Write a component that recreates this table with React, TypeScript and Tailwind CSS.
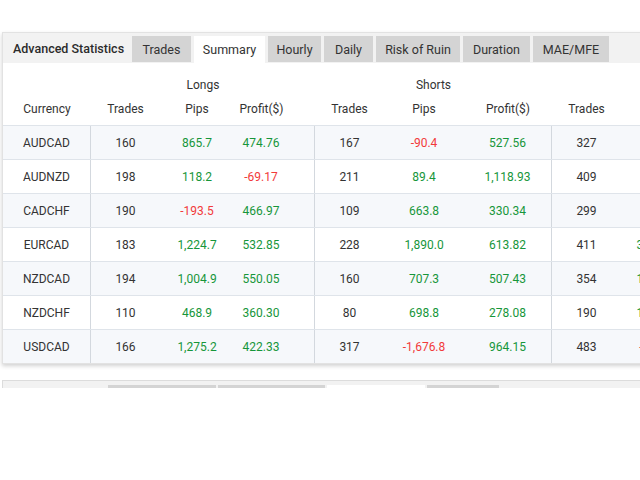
import React from "react";

type Row = {
  cur: string;
  lt: string; lp: string; lpr: string;
  st: string; sp: string; spr: string;
  tt: string; tp: string; tpr: string;
};

const rows: Row[] = [
  { cur: "AUDCAD", lt: "160", lp: "865.7", lpr: "474.76", st: "167", sp: "-90.4", spr: "527.56", tt: "327", tp: "775.3", tpr: "1,002.32" },
  { cur: "AUDNZD", lt: "198", lp: "118.2", lpr: "-69.17", st: "211", sp: "89.4", spr: "1,118.93", tt: "409", tp: "207.6", tpr: "1,049.76" },
  { cur: "CADCHF", lt: "190", lp: "-193.5", lpr: "466.97", st: "109", sp: "663.8", spr: "330.34", tt: "299", tp: "470.3", tpr: "797.31" },
  { cur: "EURCAD", lt: "183", lp: "1,224.7", lpr: "532.85", st: "228", sp: "1,890.0", spr: "613.82", tt: "411", tp: "3,114.7", tpr: "1,146.67" },
  { cur: "NZDCAD", lt: "194", lp: "1,004.9", lpr: "550.05", st: "160", sp: "707.3", spr: "507.43", tt: "354", tp: "1,712.2", tpr: "1,057.48" },
  { cur: "NZDCHF", lt: "110", lp: "468.9", lpr: "360.30", st: "80", sp: "698.8", spr: "278.08", tt: "190", tp: "1,167.7", tpr: "638.38" },
  { cur: "USDCAD", lt: "166", lp: "1,275.2", lpr: "422.33", st: "317", sp: "-1,676.8", spr: "964.15", tt: "483", tp: "-401.6", tpr: "1,386.48" },
];

const tabs = [
  { label: "Trades", w: "w-[59px]", active: false },
  { label: "Summary", w: "w-[71px]", active: true },
  { label: "Hourly", w: "w-[53px]", active: false },
  { label: "Daily", w: "w-[49px]", active: false },
  { label: "Risk of Ruin", w: "w-[84px]", active: false },
  { label: "Duration", w: "w-[67px]", active: false },
  { label: "MAE/MFE", w: "w-[76px]", active: false },
];

function Num({ v }: { v: string }) {
  const neg = v.startsWith("-");
  return <span className={neg ? "text-[#f23a3a]" : "text-[#16963a]"}>{v}</span>;
}

export default function App() {
  return (
    <div
      className="w-[640px] h-[480px] overflow-hidden bg-white pt-[32px] pl-[2px] text-[#333] text-[12px]"
      style={{ fontFamily: "Roboto, 'Liberation Sans', sans-serif" }}
    >
      <div className="w-[800px] border border-[#e2e2e2] shadow-[0_2px_4px_rgba(0,0,0,0.18)] bg-white">
        {/* header / tabs */}
        <div className="flex items-end h-[30px] bg-[#f2f2f2]">
          <div className="w-[129px] shrink-0 pl-[10px] pt-[2px] self-center text-[12.5px] font-medium text-[#2b2b2b]">
            Advanced Statistics
          </div>
          <div className="flex gap-[3px]">
            {tabs.map((t) => (
              <div
                key={t.label}
                className={`${t.w} shrink-0 h-[26px] pt-[2px] flex items-center justify-center text-[12.5px] ${
                  t.active ? "bg-white text-[#333] h-[27px]" : "bg-[#d4d4d4] text-[#333]"
                }`}
              >
                {t.label}
              </div>
            ))}
          </div>
        </div>

        {/* group header */}
        <div className="flex h-[29px] pt-[15px] leading-[14px]">
          <div className="w-[88px] shrink-0" />
          <div className="w-[224px] shrink-0 text-center">Longs</div>
          <div className="w-[237px] shrink-0 text-center">Shorts</div>
          <div className="w-[207px] shrink-0 text-center">Total</div>
        </div>
        {/* column header */}
        <div className="flex h-[33px] items-center pt-[1px]">
          <div className="w-[88px] shrink-0 text-center">Currency</div>
          <div className="w-[69px] shrink-0 text-center">Trades</div>
          <div className="w-[74px] shrink-0 text-center">Pips</div>
          <div className="w-[81px] shrink-0 pr-[26px] text-center">Profit($)</div>
          <div className="w-[69px] shrink-0 text-center">Trades</div>
          <div className="w-[80px] shrink-0 text-center">Pips</div>
          <div className="w-[88px] shrink-0 text-center">Profit($)</div>
          <div className="w-[69px] shrink-0 text-center">Trades</div>
          <div className="w-[70px] shrink-0 text-center">Pips</div>
          <div className="w-[68px] shrink-0 text-center">Profit($)</div>
        </div>

        {/* rows */}
        {rows.map((r, i) => (
          <div
            key={r.cur}
            className={`flex h-[34px] border-t border-[#dfe4ea] ${i % 2 === 0 ? "bg-[#f6f8fb]" : "bg-white"}`}
          >
            <div className="w-[88px] shrink-0 flex items-center justify-center border-r border-[#d3d8de]">{r.cur}</div>
            <div className="w-[69px] shrink-0 flex items-center justify-center">{r.lt}</div>
            <div className="w-[74px] shrink-0 flex items-center justify-center"><Num v={r.lp} /></div>
            <div className="w-[81px] shrink-0 pr-[26px] flex items-center justify-center border-r border-[#d3d8de]"><Num v={r.lpr} /></div>
            <div className="w-[69px] shrink-0 flex items-center justify-center">{r.st}</div>
            <div className="w-[80px] shrink-0 flex items-center justify-center"><Num v={r.sp} /></div>
            <div className="w-[88px] shrink-0 flex items-center justify-center border-r border-[#d3d8de]"><Num v={r.spr} /></div>
            <div className="w-[69px] shrink-0 flex items-center justify-center">{r.tt}</div>
            <div className="w-[70px] shrink-0 flex items-center justify-center"><Num v={r.tp} /></div>
            <div className="w-[68px] shrink-0 flex items-center justify-center"><Num v={r.tpr} /></div>
          </div>
        ))}
      </div>

      {/* second panel, clipped */}
      <div className="mt-[16px] w-[800px] h-[8px] overflow-hidden border-t border-l border-[#dcdcdc] bg-[#f2f2f2]">
        <div className="flex gap-[2px] pt-[4px] pl-[105px]">
          <div className="w-[108px] shrink-0 h-[20px] bg-[#d4d4d4]" />
          <div className="w-[107px] shrink-0 h-[20px] bg-[#d4d4d4]" />
          <div className="w-[98px] shrink-0 h-[20px] bg-white" />
          <div className="w-[72px] shrink-0 h-[20px] bg-[#d4d4d4]" />
        </div>
      </div>
    </div>
  );
}
